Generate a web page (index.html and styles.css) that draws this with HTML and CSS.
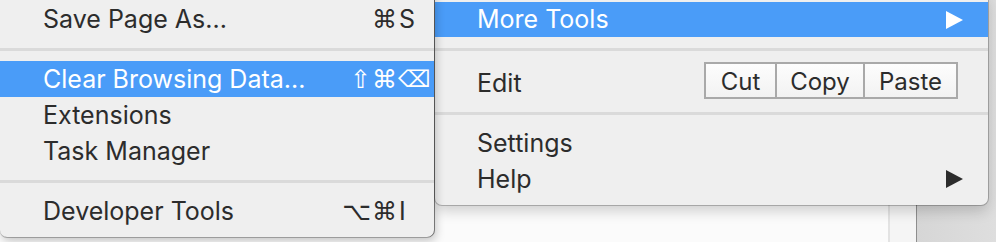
FILE: index.html
```html
<!DOCTYPE html>
<html lang="en">
<head>
    <meta charset="UTF-8">
    <meta name="viewport" content="width=device-width, initial-scale=1.0">
    <title>Chrome Menu - More Tools</title>
    <link rel="stylesheet" href="styles.css">
</head>
<body>
    <div class="desktop">
        <!-- Main menu, with More Tools open -->
        <div class="menu menu--main">
            <div class="menu-item menu-item--active menu-item--tall">
                <span class="menu-label">More Tools</span>
                <svg class="submenu-arrow" width="17" height="18" viewBox="0 0 17 18"><polygon points="0,0 17,9 0,18" fill="currentColor"/></svg>
            </div>
            <div class="menu-sep"></div>
            <div class="menu-item menu-item--edit">
                <span class="menu-label">Edit</span>
                <div class="edit-group">
                    <button class="edit-button edit-button--cut">Cut</button>
                    <button class="edit-button edit-button--copy">Copy</button>
                    <button class="edit-button edit-button--paste">Paste</button>
                </div>
            </div>
            <div class="menu-sep"></div>
            <div class="menu-item">
                <span class="menu-label">Settings</span>
            </div>
            <div class="menu-item">
                <span class="menu-label">Help</span>
                <svg class="submenu-arrow" width="17" height="18" viewBox="0 0 17 18"><polygon points="0,0 17,9 0,18" fill="currentColor"/></svg>
            </div>
        </div>

        <!-- More Tools submenu -->
        <div class="menu menu--sub">
            <div class="menu-item">
                <span class="menu-label">Save Page As...</span>
                <span class="shortcut"><span class="shortcut-mods">⌘</span><span class="shortcut-key">S</span></span>
            </div>
            <div class="menu-sep"></div>
            <div class="menu-item menu-item--active">
                <span class="menu-label">Clear Browsing Data...</span>
                <span class="shortcut"><span class="shortcut-mods">⇧⌘</span><span class="shortcut-key shortcut-key--symbol">⌫</span></span>
            </div>
            <div class="menu-item">
                <span class="menu-label">Extensions</span>
            </div>
            <div class="menu-item">
                <span class="menu-label">Task Manager</span>
            </div>
            <div class="menu-sep"></div>
            <div class="menu-item">
                <span class="menu-label">Developer Tools</span>
                <span class="shortcut"><span class="shortcut-mods">⌥⌘</span><span class="shortcut-key">I</span></span>
            </div>
        </div>
    </div>
</body>
</html>
```

FILE: styles.css
```css
:root {
    --menu-bg: #efefef;
    --menu-text: #2c2c2c;
    --menu-highlight: #4a9cf8;
    --menu-sep: #dadada;
    --button-border: #a9a9a9;

    --font-menu: 'Inter', 'Liberation Sans', sans-serif;
    --font-symbols: 'DejaVu Sans', sans-serif;
    --row-height: 36px;
}

*, *::before, *::after {
    box-sizing: border-box;
    margin: 0;
    padding: 0;
}

body {
    font-family: var(--font-menu);
    color: var(--menu-text);
    overflow: hidden;
}

/* page behind the menus: browser content, window edge, desktop */
.desktop {
    position: relative;
    width: 996px;
    height: 242px;
    background: linear-gradient(to right,
        #fbfbfb 0, #fbfbfb 888px,
        #e3e3e3 888px, #e3e3e3 890px,
        #f5f5f5 890px, #f5f5f5 916px,
        #8e8e8e 916px, #8e8e8e 917px,
        #d6d6d6 917px, #dedede 996px);
}

.menu {
    position: absolute;
    top: -8px;
    background: var(--menu-bg);
    border-radius: 7px;
    display: flex;
    flex-direction: column;
}

.menu--main {
    left: 435px;
    width: 553px;
    padding: 10px 0 8px;
    box-shadow: 0 0 0 1px rgba(0, 0, 0, 0.22), 0 6px 14px rgba(0, 0, 0, 0.18);
}

.menu--sub {
    left: 0;
    width: 434px;
    padding: 9px 0 8px;
    box-shadow: 1px 0 0 rgba(0, 0, 0, 0.45), 0 1px 0 rgba(0, 0, 0, 0.25), 2px 4px 10px rgba(0, 0, 0, 0.22);
}

.menu-item {
    height: var(--row-height);
    display: flex;
    align-items: center;
    justify-content: space-between;
    padding-left: 43px;
    font-size: 25px;
    line-height: 1;
}

.menu--main .menu-item {
    padding-left: 42px;
    padding-right: 25px;
}

.menu-item--tall {
    height: 35px;
}

.menu-item--active {
    background: var(--menu-highlight);
    color: #fff;
}

.menu-sep {
    height: 24px;
    display: flex;
    align-items: center;
}

.menu-sep::after {
    content: '';
    width: 100%;
    height: 3px;
    background: var(--menu-sep);
}

.submenu-arrow {
    display: block;
    color: #2c2c2c;
}

.menu-item--active .submenu-arrow {
    color: #fff;
}

/* Edit row with Cut / Copy / Paste */
.menu--main .menu-item--edit {
    height: 40px;
    padding-right: 30px;
    align-items: flex-start;
}

.menu-item--edit .menu-label {
    align-self: center;
    margin-top: 4px;
}

.edit-group {
    display: flex;
    margin-top: 1px;
    border: 2px solid var(--button-border);
}

.edit-button {
    height: 33px;
    padding-top: 2px;
    border: none;
    background: linear-gradient(#fdfdfd, #f2f2f2);
    font-family: inherit;
    font-size: 24px;
    color: var(--menu-text);
    line-height: 1;
}

.edit-button + .edit-button {
    border-left: 2px solid var(--button-border);
}

.edit-button--cut { width: 69px; }
.edit-button--copy { width: 88px; }
.edit-button--paste { width: 93px; }

/* keyboard shortcuts: modifier column right aligned, key left aligned */
.shortcut {
    display: flex;
    align-items: center;
    font-family: var(--font-symbols);
    font-size: 25px;
    padding-right: 4px;
}

.shortcut-mods {
    letter-spacing: 1px;
}

.shortcut-key {
    width: 32px;
    padding-left: 1px;
    font-family: var(--font-menu);
    font-size: 25px;
}

.shortcut-key--symbol {
    padding-left: 0;
    font-family: var(--font-symbols);
    font-size: 23px;
}
```
